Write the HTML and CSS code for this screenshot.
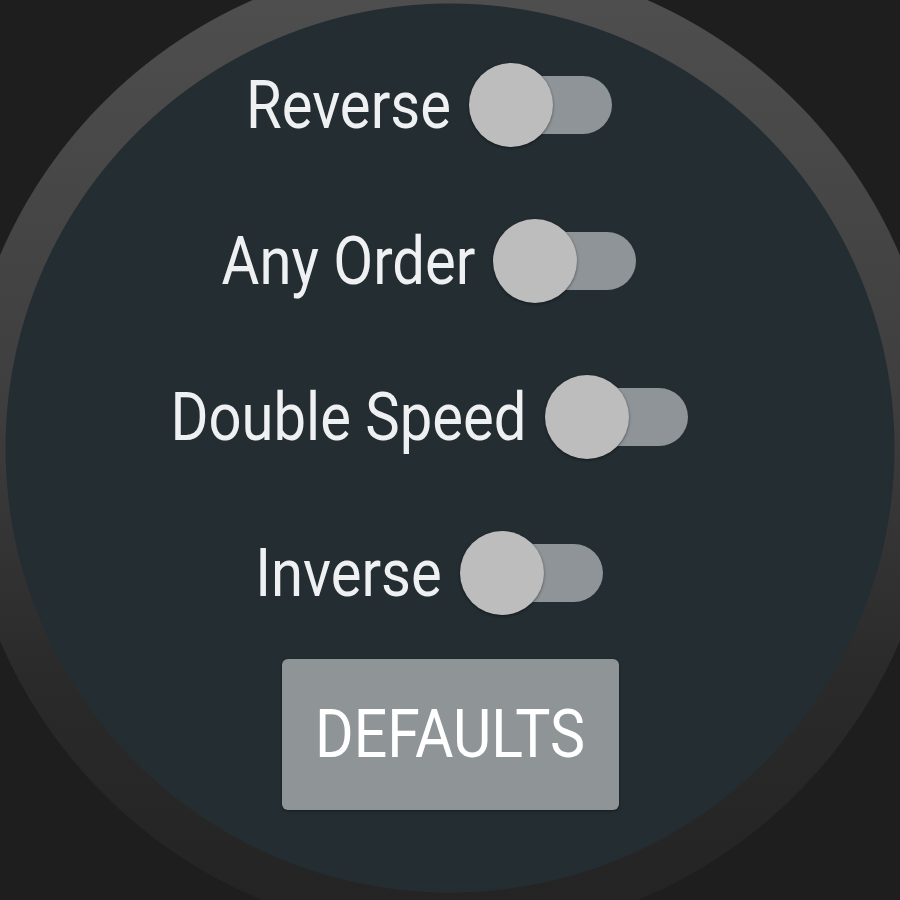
FILE: index.html
```html
<!DOCTYPE html>
<html lang="en">

<head>
    <meta charset="UTF-8">
    <meta name="viewport" content="width=device-width, initial-scale=1.0">
    <title>Options</title>
    <link rel="stylesheet" href="styles.css">
</head>

<body>

    <div class="screen">
        <div class="option">
            <span class="label">Reverse</span>
            <span class="switch"><span class="track"></span><span class="thumb"></span></span>
        </div>

        <div class="option">
            <span class="label">Any Order</span>
            <span class="switch"><span class="track"></span><span class="thumb"></span></span>
        </div>

        <div class="option">
            <span class="label">Double Speed</span>
            <span class="switch"><span class="track"></span><span class="thumb"></span></span>
        </div>

        <div class="option">
            <span class="label">Inverse</span>
            <span class="switch"><span class="track"></span><span class="thumb"></span></span>
        </div>

        <button type="button" class="button"><span class="caption">DEFAULTS</span></button>
    </div>

</body>

</html>
```

FILE: styles.css
```css
body {
    margin: 0;
    padding: 0;
    font-family: Roboto, "Noto Sans", sans-serif;
    background-color: #1e1e1e;
    background-image:
        radial-gradient(circle at 450px 448px, #232d32 444px, transparent 445px, transparent 489px, #1e1e1e 490px),
        linear-gradient(#4e4e4e, #3e3e3e 45%, #2a2a2a 75%, #242424);
    background-repeat: no-repeat;
    background-size: 900px 900px;
}

.screen {
    width: 900px;
    height: 900px;
    box-sizing: border-box;
    padding-top: 27px;
    display: flex;
    flex-direction: column;
    align-items: center;
    overflow: hidden;
}

.option {
    height: 156px;
    display: flex;
    align-items: center;
    justify-content: center;
    gap: 18px;
    padding-right: 42px;
}

.label {
    display: inline-block;
    font-size: 58px;
    line-height: 1;
    color: #eef0f1;
    transform: scaleY(1.14);
}

.switch {
    position: relative;
    width: 143px;
    height: 84px;
}

.track {
    position: absolute;
    left: 12px;
    right: 0;
    top: 13px;
    height: 58px;
    border-radius: 29px;
    background-color: #8e9497;
}

.thumb {
    position: absolute;
    left: 0;
    top: 0;
    width: 84px;
    height: 84px;
    border-radius: 50%;
    background-color: #bdbdbd;
    box-shadow: 0 1px 3px rgba(0, 0, 0, 0.45);
}

.button {
    margin-top: 8px;
    width: 337px;
    height: 151px;
    padding: 0;
    border: none;
    border-radius: 6px;
    background-color: #8f9497;
    box-shadow: 0 1px 3px rgba(0, 0, 0, 0.4);
    font-family: Roboto, "Noto Sans", sans-serif;
    color: #fff;
    cursor: pointer;
}

.caption {
    display: inline-block;
    font-size: 59px;
    line-height: 1;
    transform: scaleY(1.12);
}
```
